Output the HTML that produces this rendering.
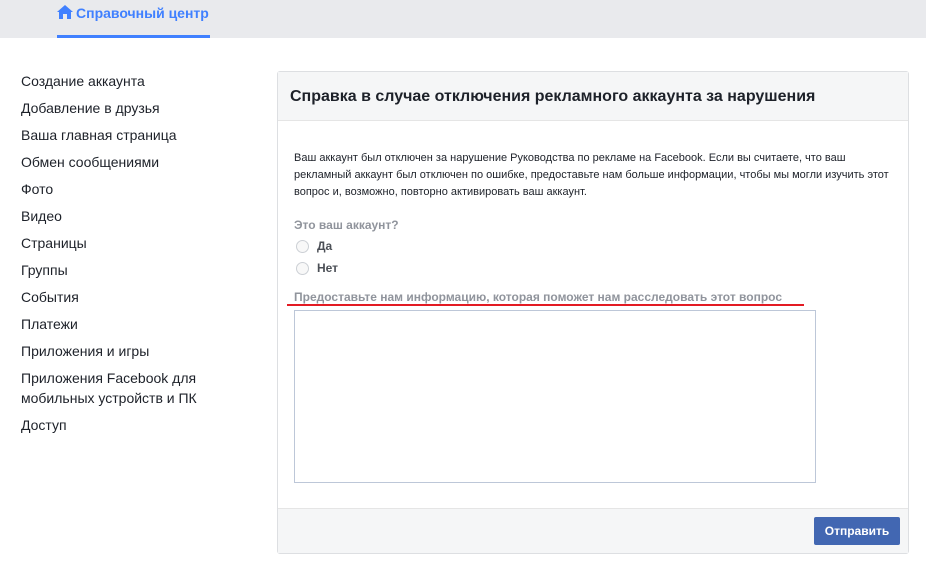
<!DOCTYPE html>
<html><head><meta charset="utf-8"><style>
*{margin:0;padding:0;box-sizing:border-box}
body{width:926px;height:567px;background:#fff;font-family:"Liberation Sans",Arial,sans-serif;position:relative;overflow:hidden;color:#1d2129}
.top{position:absolute;left:0;top:0;width:926px;height:38px;background:#e9eaed}
.tab{position:absolute;left:57px;top:0;width:153px;height:38px;border-bottom:3px solid #4080ff;color:#4080ff;font-weight:bold;font-size:14px;line-height:26px;padding-left:19px}
.tab svg{position:absolute;left:0;top:5px}
.side{position:absolute;left:21px;top:71px;font-size:14px;line-height:27px}
.side div{line-height:20px;margin-bottom:7px}
.panel{position:absolute;left:277px;top:71px;width:632px;height:483px;border:1px solid #dddfe2;border-radius:3px;background:#fff}
.ph{height:49px;background:#f5f6f7;border-bottom:1px solid #e5e5e5;font-size:16px;font-weight:bold;padding:16px 0 0 12px}
.desc{position:absolute;left:16px;top:78px;width:600px;font-size:11px;line-height:17px;color:#1d2129}
.q{position:absolute;left:16px;top:146px;font-size:12px;font-weight:bold;color:#90949c}
.r{position:absolute;left:18px;font-size:12px;font-weight:bold;color:#4b4f56}
.r span{display:inline-block;width:13px;height:13px;border:1px solid #ccd0d5;border-radius:50%;vertical-align:-3px;margin-right:8px;background:#f8f8f8}
.l{position:absolute;left:16px;top:218px;font-size:12px;font-weight:bold;color:#90949c}
.red{position:absolute;left:9px;top:232px;width:517px;height:2px;background:#e31b23}
.ta{position:absolute;left:16px;top:238px;width:522px;height:173px;border:1px solid #bdc7d8}
.ft{position:absolute;left:0;bottom:0;width:630px;height:45px;background:#f5f6f7;border-top:1px solid #e5e5e5}
.btn{position:absolute;right:8px;top:8px;width:86px;height:28px;background:#4267b2;border-radius:2px;color:#fff;font-weight:bold;font-size:12px;text-align:center;line-height:28px}
</style></head><body>
<div class="top"><div class="tab"><svg width="16" height="14" viewBox="0 0 16 14"><path d="M8 0L0 7h2v7h4V9h4v5h4V7h2z" fill="#4080ff"/></svg>Справочный центр</div></div>
<div class="side">
<div>Создание аккаунта</div><div>Добавление в друзья</div><div>Ваша главная страница</div><div>Обмен сообщениями</div><div>Фото</div><div>Видео</div><div>Страницы</div><div>Группы</div><div>События</div><div>Платежи</div><div>Приложения и игры</div><div>Приложения Facebook для<br>мобильных устройств и ПК</div><div>Доступ</div>
</div>
<div class="panel">
<div class="ph">Справка в случае отключения рекламного аккаунта за нарушения</div>
<div class="desc">Ваш аккаунт был отключен за нарушение Руководства по рекламе на Facebook. Если вы считаете, что ваш рекламный аккаунт был отключен по ошибке, предоставьте нам больше информации, чтобы мы могли изучить этот вопрос и, возможно, повторно активировать ваш аккаунт.</div>
<div class="q">Это ваш аккаунт?</div>
<div class="r" style="top:167px"><span></span>Да</div>
<div class="r" style="top:189px"><span></span>Нет</div>
<div class="l">Предоставьте нам информацию, которая поможет нам расследовать этот вопрос</div>
<div class="red"></div>
<div class="ta"></div>
<div class="ft"><div class="btn">Отправить</div></div>
</div>
</body></html>
